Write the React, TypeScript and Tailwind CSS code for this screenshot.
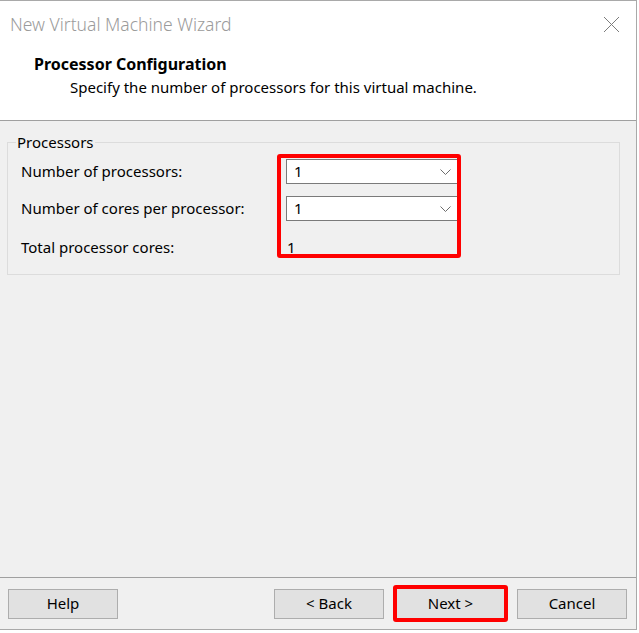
import React from 'react';

const font = { fontFamily: '"Noto Sans", "Open Sans", sans-serif' };

function Chevron() {
  return (
    <svg width="11" height="6" viewBox="0 0 11 6" className="text-[#6d6d6d]">
      <polyline points="0.5,0.5 5.5,5.5 10.5,0.5" fill="none" stroke="currentColor" strokeWidth="1" />
    </svg>
  );
}

function Dropdown({ value }: { value: string }) {
  return (
    <div className="w-[174px] h-[25px] bg-white border border-[#7a7a7a] flex items-center justify-between pl-[7px] pr-[8px]">
      <span className="text-[15px] text-black leading-none">{value}</span>
      <Chevron />
    </div>
  );
}

function WizButton({ label, className = '' }: { label: string; className?: string }) {
  return (
    <div className={`w-[110px] h-[30px] bg-[#e1e1e1] border border-[#adadad] flex items-center justify-center text-[15px] text-black ${className}`}>
      {label}
    </div>
  );
}

export default function App() {
  return (
    <div className="w-[639px] h-[633px] bg-white" style={font}>
      <div className="w-[637px] h-[630px] border-t border-r border-b border-[#a9a9a9] flex flex-col">
        {/* header */}
        <div className="h-[120px] bg-white border-b border-[#a0a0a0] flex flex-col">
          <div className="h-[46px] flex items-center justify-between pl-[10px] pr-[16px]">
            <span className="text-[17.5px] text-[#9b9b9b] font-light">New Virtual Machine Wizard</span>
            <svg width="17" height="17" viewBox="0 0 17 17" className="text-[#7c7c7c]">
              <path d="M1 1 L16 16 M16 1 L1 16" stroke="currentColor" strokeWidth="1" fill="none" />
            </svg>
          </div>
          <div className="pl-[34px] pt-[7px] text-[16px] font-bold text-black leading-[20px]">Processor Configuration</div>
          <div className="pl-[70px] pt-[3px] text-[15px] text-black leading-[20px]">Specify the number of processors for this virtual machine.</div>
        </div>

        {/* body */}
        <div className="flex-1 bg-[#f0f0f0] px-[7px] pt-[21px]">
          <fieldset className="relative border border-[#dcdcdc] h-[141px] mr-[9px] -mt-[8px]">
            <legend className="ml-[8px] px-[1px] text-[15px] text-black leading-[16px]">Processors</legend>
            <div className="flex flex-col pl-[13px] pt-[3px] text-[15px] text-black">
              <div className="h-[37px] flex items-center">
                <span className="w-[265px]">Number of processors:</span>
                <Dropdown value="1" />
              </div>
              <div className="h-[37px] flex items-center">
                <span className="w-[265px]">Number of cores per processor:</span>
                <Dropdown value="1" />
              </div>
              <div className="h-[40px] flex items-center">
                <span className="w-[265px]">Total processor cores:</span>
                <span className="pl-[1px] pt-[1px] text-[15px]">1</span>
              </div>
            </div>
            <div className="absolute left-[269px] top-[4px] w-[184px] h-[104px] border-[4px] border-[#ff0000] rounded-[3px]" />
          </fieldset>
        </div>

        {/* footer */}
        <div className="h-[52px] bg-[#f0f0f0] border-t border-[#a0a0a0] flex items-center">
          <WizButton label="Help" className="ml-[8px]" />
          <WizButton label="< Back" className="ml-auto" />
          <div className="ml-[9px] w-[115px] h-[37px] border-[4px] border-[#ff0000] rounded-[3px] bg-[#e1e1e1] flex items-center justify-center text-[15px] text-black">
            {'Next >'}
          </div>
          <WizButton label="Cancel" className="ml-[9px] mr-[9px]" />
        </div>
      </div>
    </div>
  );
}
